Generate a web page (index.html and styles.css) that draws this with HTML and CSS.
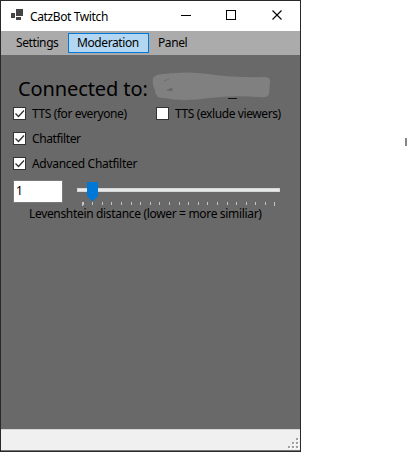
FILE: index.html
```
<!DOCTYPE html>
<html lang="en">
<head>
<meta charset="utf-8">
<title>CatzBot Twitch</title>
<link rel="stylesheet" href="styles.css">
</head>
<body>
<main class="window">
  <header class="titlebar">
    <svg class="app-icon" width="12" height="12" viewBox="0 0 12 12" shape-rendering="crispEdges"><path d="M5 0h7v7H5zM0 4h4v5H0zM5 8h5v3H5z" fill="#444"/></svg>
    <span class="title">CatzBot Twitch</span>
    <svg class="controls" width="102" height="12" viewBox="0 0 102 12"><path d="M0 5.500h10M45.500 .5h9v9h-9z" fill="none" stroke="#000" shape-rendering="crispEdges"/><path d="M91.500 .5l9 9m0-9l-9 9" stroke="#000" stroke-width="1.1"/></svg>
  </header>
  <nav class="menu">
    <span class="item settings">Settings</span>
    <span class="item moderation">Moderation</span>
    <span class="item panel">Panel</span>
  </nav>
  <section class="content">
    <div class="connected">
      <h1>Connected to:</h1>
      <svg class="account" width="121" height="30" viewBox="0 0 121 30">
        <path d="M4 22h3v2H4z" fill="#4d4a42"/>
        <path d="M1 6Q4 2 12 2Q35 -1 56 2Q85 6 112 5Q119 5 118 10L117 22Q116 26 107 25Q81 23 57 26Q31 30 12 26Q3 27 3 18Q0 14 1 6Z" fill="#808080"/>
        <path d="M76 26.500h9" stroke="#111" stroke-width="1"/>
        <path d="M12 9l5-2M15 18l5-2v3z" stroke="#6a6a6a" fill="#606468" stroke-width=".8"/>
      </svg>
    </div>
    <div class="checks">
      <label><svg class="box" viewBox="0 0 13 13"><rect x=".5" y=".5" width="12" height="12" fill="#fff" stroke="#333"/><path d="M2.500 6.500l3 3 5.500-6" fill="none" stroke="#333" stroke-width="1.3"/></svg><span class="everyone">TTS (for everyone)</span></label>
      <label><svg class="box" viewBox="0 0 13 13"><rect x=".5" y=".5" width="12" height="12" fill="#fff" stroke="#333"/></svg><span class="viewers">TTS (exlude viewers)</span></label>
      <label><svg class="box" viewBox="0 0 13 13"><rect x=".5" y=".5" width="12" height="12" fill="#fff" stroke="#333"/><path d="M2.500 6.500l3 3 5.500-6" fill="none" stroke="#333" stroke-width="1.3"/></svg><span class="filter">Chatfilter</span></label>
      <label><svg class="box" viewBox="0 0 13 13"><rect x=".5" y=".5" width="12" height="12" fill="#fff" stroke="#333"/><path d="M2.500 6.500l3 3 5.500-6" fill="none" stroke="#333" stroke-width="1.3"/></svg><span class="advanced">Advanced Chatfilter</span></label>
    </div>
    <div class="distance">
      <div class="value">1</div>
      <svg class="slider" width="204" height="26" viewBox="0 0 204 26">
        <rect x=".5" y="8.500" width="202" height="3" fill="#e7eaea" stroke="#d6d6d6"/>
        <path d="M5.500 23.500H198" stroke="#c4c4c4" stroke-width="3" stroke-dasharray="1 8.600" shape-rendering="crispEdges"/>
        <path d="M5 22h1v4H5zM197 22h1v4h-1z" fill="#c4c4c4"/>
        <path d="M10 2h11v14l-5.500 5.500L10 16z" fill="#0078d7"/>
      </svg>
    </div>
    <div class="caption"><span class="caption-text">Levenshtein distance (lower = more similiar)</span></div>
  </section>
  <footer class="status">
    <svg width="11" height="11" viewBox="0 0 11 11" shape-rendering="crispEdges"><path d="M9 1h2v2H9zM5 5h2v2H5zM9 5h2v2H9zM1 9h2v2H1zM5 9h2v2H5zM9 9h2v2H9z" fill="#fff"/><path d="M8 0h2v2H8zM4 4h2v2H4zM8 4h2v2H8zM0 8h2v2H0zM4 8h2v2H4zM8 8h2v2H8z" fill="#a0a0a0"/></svg>
  </footer>
</main>
<div class="edge-mark"></div>
</body>
</html>
```
FILE: styles.css
```
* { box-sizing: border-box; }
body {
  margin: 0;
  width: 407px;
  height: 452px;
  overflow: hidden;
  display: flex;
  justify-content: space-between;
  background: #fff;
  color: #000;
  font: 12px/16px "Noto Sans", "Open Sans", sans-serif;
}
span, h1 { white-space: nowrap; }
.window {
  width: 301px;
  height: 452px;
  border: 1px solid #29292c;
  display: flex;
  flex-direction: column;
}
.titlebar {
  height: 30px;
  background: #fff;
  display: flex;
  padding: 8px 17px 0 10px;
}
.app-icon { margin-right: 7px; }
.title { letter-spacing: -.38px; }
.controls { margin: 1px 0 0 auto; }
.menu {
  height: 24px;
  background: #ababab;
  display: flex;
  padding: 2px 0 2px 7px;
}
.item {
  height: 20px;
  padding: 0 8px;
  border: 1px solid transparent;
  line-height: 18px;
  letter-spacing: -.4px;
}
.settings { width: 60px; padding-left: 7px; }
.moderation { width: 81px; background: #b3d7f3; border-color: #0078d7; }
.content {
  height: 374px;
  background: #696969;
  padding: 17px 0 0 12px;
}
.connected { height: 35px; display: flex; }
h1 {
  width: 139px;
  margin: 0;
  padding-left: 5px;
  font-size: 20px;
  font-weight: 400;
  line-height: 33px;
  letter-spacing: -.1px;
}
.account { flex: none; }
.checks {
  display: grid;
  grid-template-columns: 143px 1fr;
  grid-template-rows: 25px 25px 23px;
}
.checks label { display: flex; height: 13px; line-height: 13px; }
.checks label:nth-child(n+3) { grid-column: 1 / -1; }
.box { width: 13px; height: 13px; margin-right: 6px; flex: none; }
.checks span { letter-spacing: -.4px; }
.checks .filter { letter-spacing: -.38px; }
.checks .advanced { letter-spacing: -.3px; }
.caption-text { letter-spacing: -.33px; }
.distance { display: flex; height: 26px; }
.value {
  width: 50px;
  height: 23px;
  background: #fff;
  border: 1px solid #7a7a7a;
  padding: 1px 2px;
  line-height: 18px;
  margin-right: 14px;
}
.caption { padding-left: 16px; line-height: 16px; }
.status {
  height: 22px;
  background: #f0f0f0;
  border-top: 1px solid #d7d7d7;
  border-bottom: 1px solid #77777a;
  display: flex;
  justify-content: flex-end;
  padding: 8px 1px 0 0;
}
.edge-mark { width: 2px; height: 8px; margin-top: 138px; background: #858585; }
```
